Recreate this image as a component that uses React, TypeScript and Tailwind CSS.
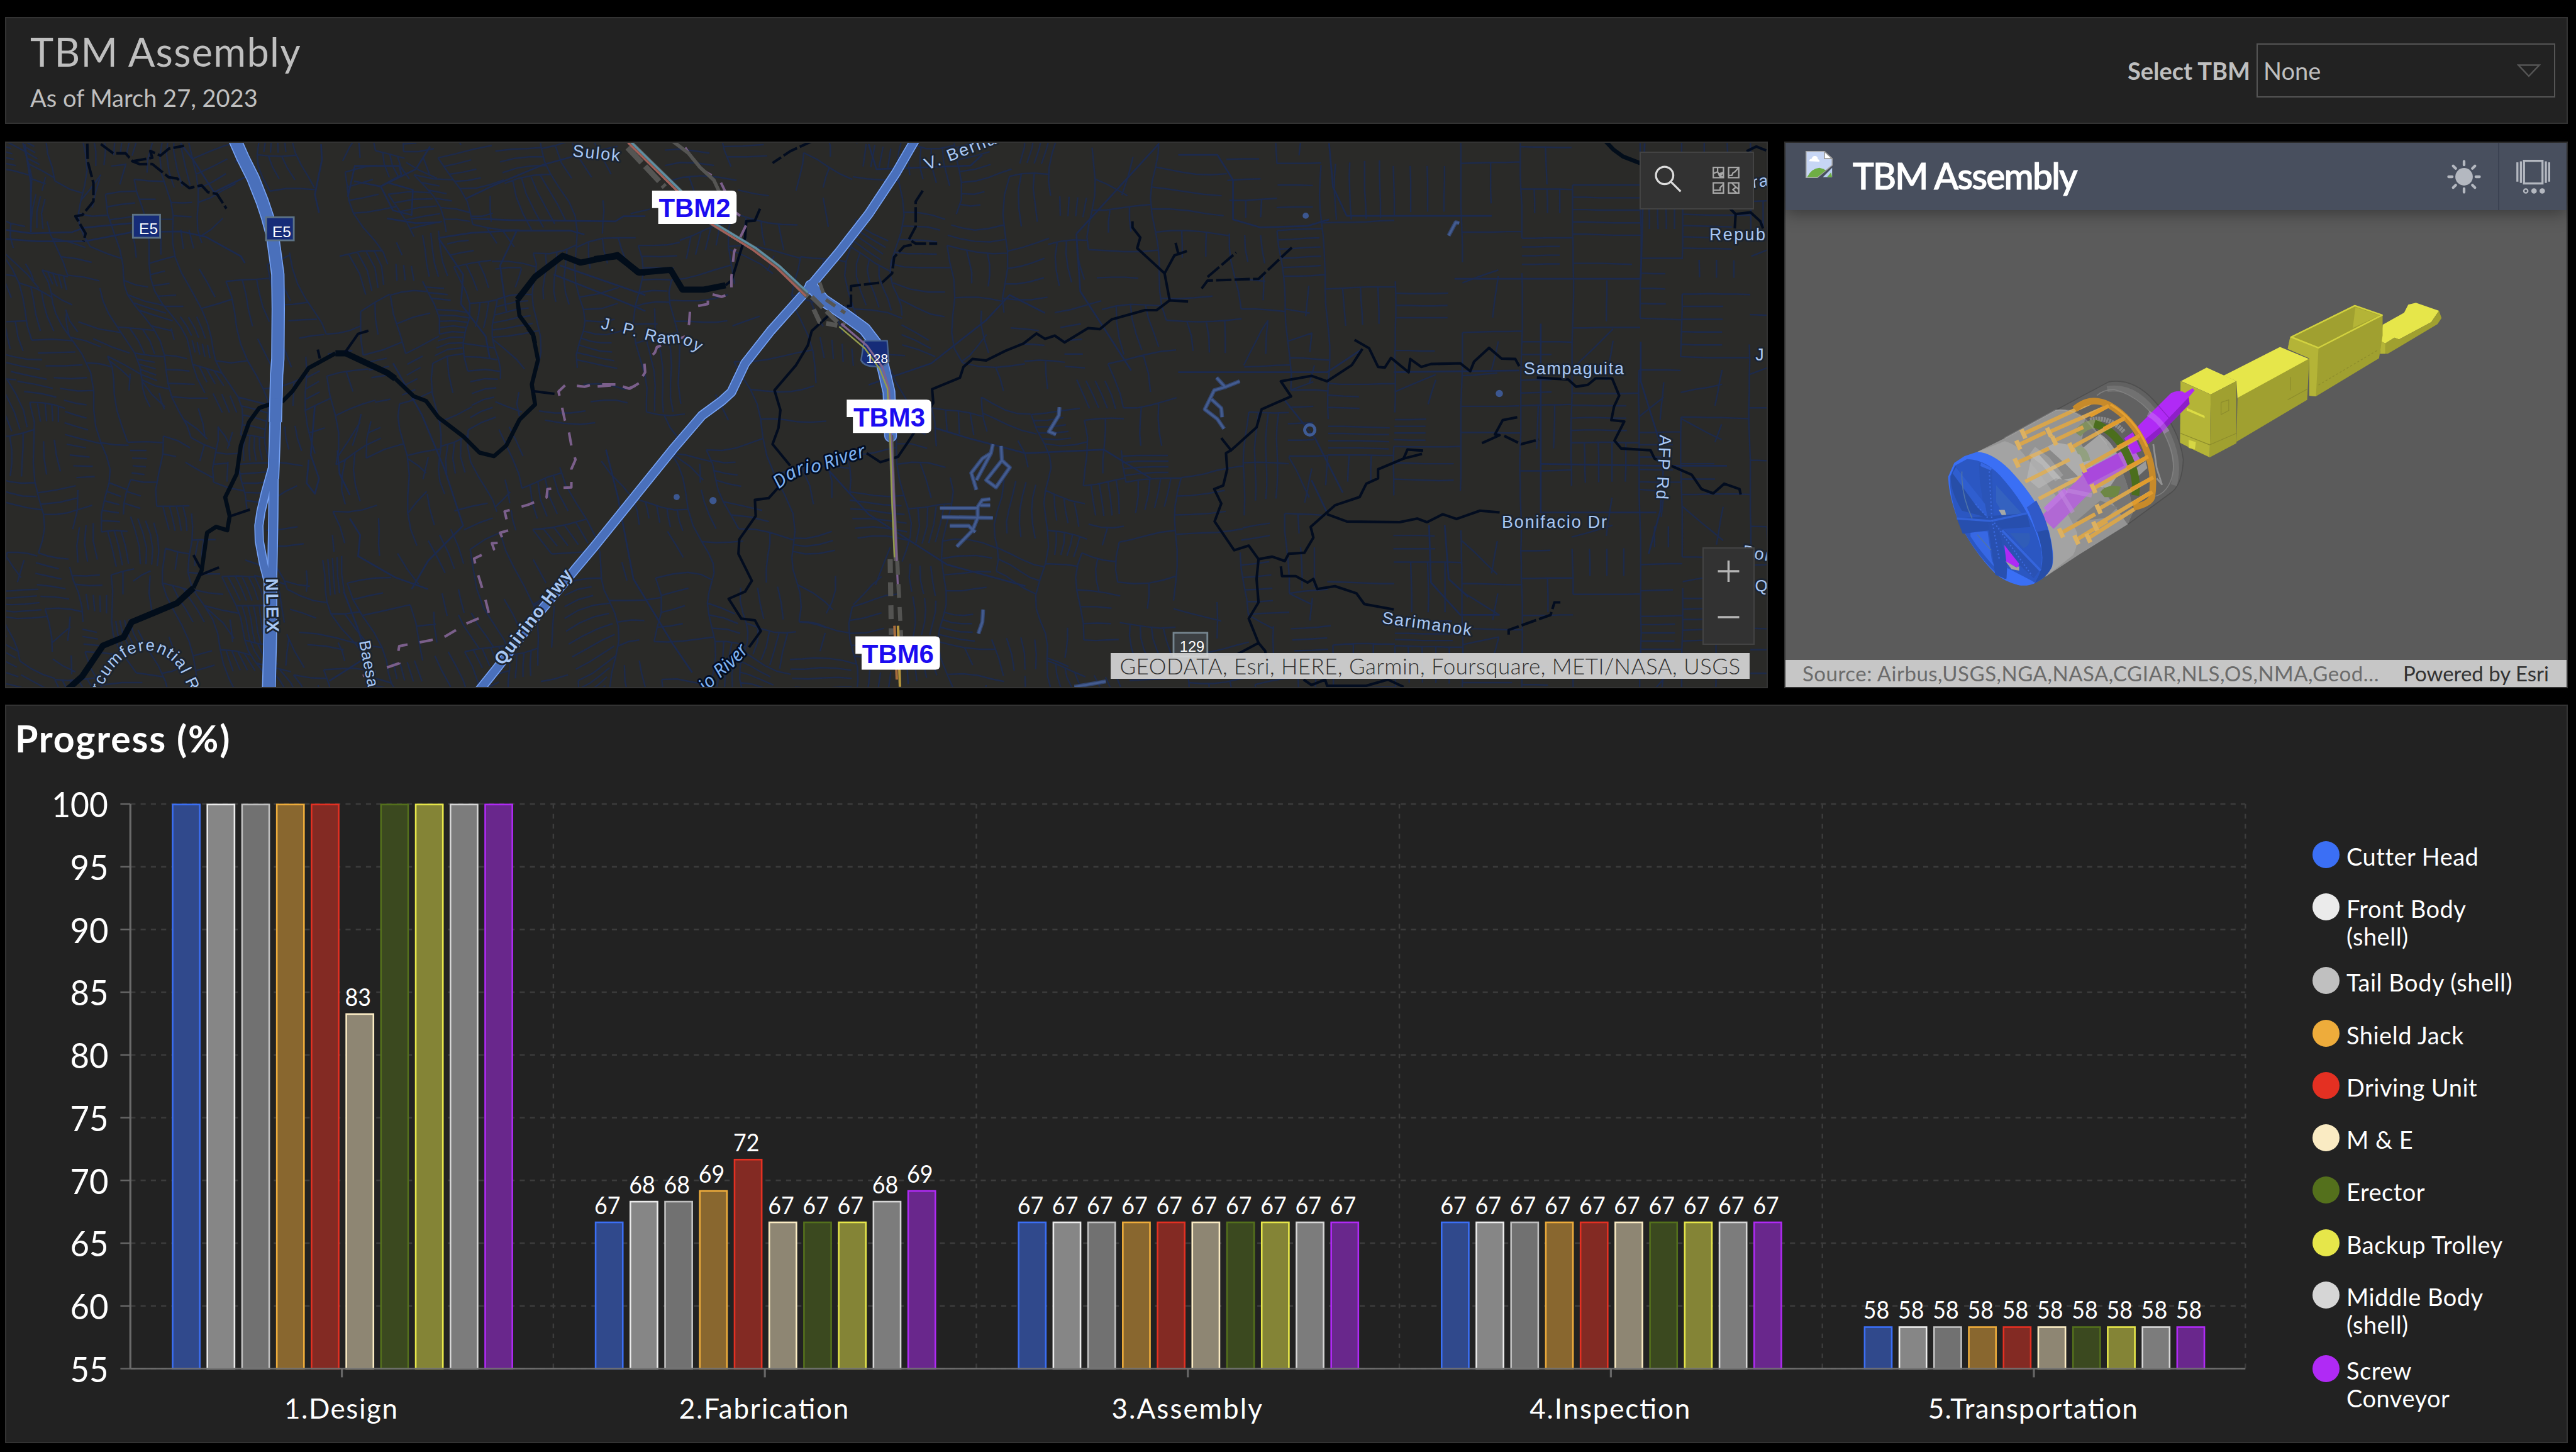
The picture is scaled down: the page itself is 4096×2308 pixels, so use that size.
import React from "react";

type Frame = [number, number, number, number];

/* Frames of the survey sheets: origin x, origin y, x scale, y scale */
const NW: Frame = [0, 0, 0.80357, 0.44643];
const MID: Frame = [1160, 260, 0.76531, 0.70153];
const EAST: Frame = [2300, 260, 0.76531, 0.70153];
const SW: Frame = [0, 640, 0.80357, 0.45918];
const SCENE: Frame = [3460, 550, 1.00064, 0.52296];

function pts(f: Frame, s: string): string {
  return s
    .trim()
    .split(/\s+/)
    .map((p) => {
      const [x, y] = p.split(",").map(Number);
      return (f[0] + x * f[2]).toFixed(1) + "," + (f[1] + y * f[3]).toFixed(1);
    })
    .join(" ");
}

/* ---------- Minor streets ---------- */

function rng(seed: number) {
  let a = seed;
  return () => {
    a = (a + 0x6d2b79f5) | 0;
    let t = Math.imul(a ^ (a >>> 15), 1 | a);
    t = (t + Math.imul(t ^ (t >>> 7), 61 | t)) ^ t;
    return ((t ^ (t >>> 14)) >>> 0) / 4294967296;
  };
}

/* Bends the regular lattice: straight in the east, slanted and wavy in the west */
function bend(x: number, y: number): [number, number] {
  const s = Math.max(0, Math.min(1, (2700 - x) / 1500));
  const amp = 2 + 24 * Math.min(1, s * 2);
  return [
    x + s * 0.22 * (y - 800) + amp * Math.sin(y / 110 + x / 330) + amp * 0.35 * Math.sin(y / 31 + x / 47),
    y + s * 60 * Math.sin(x / 300) + amp * Math.sin(x / 120 - y / 260) + amp * 0.35 * Math.sin(x / 37 - y / 53),
  ];
}

function isOpen(x: number, y: number): boolean {
  return (
    (x > 1010 && x < 1090 && y > 690 && y < 900) ||
    (x > 575 && x < 690 && y > 380 && y < 600) ||
    (x > 430 && x < 500 && y > 340 && y < 480) ||
    (x > 560 && x < 650 && y > 880 && y < 1100) ||
    (x > 400 && x < 500 && y > 980 && y < 1120) ||
    (x > 2560 && x < 2920 && y > 940 && y < 1040) ||
    (x > 2660 && x < 2860 && y > 430 && y < 470)
  );
}

function buildStreets(): string {
  const r = rng(417);
  const out: string[] = [];
  const road = (x1: number, y1: number, x2: number, y2: number) => {
    const [mx, my] = bend((x1 + x2) / 2, (y1 + y2) / 2);
    if (isOpen(mx, my)) return;
    const n = Math.max(1, Math.round(Math.hypot(x2 - x1, y2 - y1) / 28));
    let d = "";
    for (let i = 0; i <= n; i++) {
      const [px, py] = bend(x1 + ((x2 - x1) * i) / n, y1 + ((y2 - y1) * i) / n);
      d += `${i ? "L" : "M"}${px.toFixed(0)} ${py.toFixed(0)}`;
    }
    out.push(d);
  };
  let x = -260;
  while (x < 3700) {
    const west = x < 1000;
    const w = (west ? 46 : 72) + r() * (west ? 44 : 72);
    let y = 60 + r() * 60;
    while (y < 1560) {
      const h = (west ? 46 : 58) + r() * (west ? 60 : 78);
      if (r() < 0.66) road(x, y, x, y + h);
      if (r() < 0.66) road(x, y, x + w, y);
      const kind = r();
      const n = 1 + Math.floor(r() * 4);
      if (kind < 0.36) {
        const reach = 0.45 + r() * 0.55;
        for (let i = 1; i <= n; i++) road(x + (w * i) / (n + 1), y, x + (w * i) / (n + 1), y + h * reach);
      } else if (kind < 0.66) {
        const reach = 0.45 + r() * 0.55;
        for (let i = 1; i <= n; i++) road(x, y + (h * i) / (n + 1), x + w * reach, y + (h * i) / (n + 1));
      } else if (kind < 0.82) {
        const c = r();
        road(x, y + h * c, x + w * 0.6, y + h * r());
        road(x + w * 0.6, y + h * 0.2, x + w * 0.5, y + h * 0.8);
      }
      y += h;
    }
    x += w;
  }
  return out.join("");
}
const STREETS = buildStreets();

const TRACED: string[] = [
  pts(NW, "15,1005 75,1020 175,1015 205,995 320,975"),
  pts(NW, "15,1045 90,1055 205,1055 320,1015 440,1012 500,1035 585,1120 595,1150"),
  pts(NW, "440,630 470,700 520,840 595,775"),
  pts(NW, "845,860 862,725 970,725 975,765 925,815 860,792"),
  pts(NW, "925,815 1010,740 1045,640"),
  pts(NW, "925,815 955,920 1000,940 1003,830 945,800"),
  pts(NW, "940,955 1010,975 1070,972"),
  pts(NW, "1145,955 1240,962 1495,968 1515,945 1568,945"),
  pts(NW, "1065,1040 1145,1018 1245,1008 1385,1008 1420,1025"),
  pts(NW, "1065,1040 1125,1200 1120,1330 1180,1470 1190,1568"),
  pts(NW, "1255,1010 1215,1160 1230,1360"),
  pts(NW, "1130,870 1200,810 1320,720 1400,680 1500,640"),
  pts(NW, "780,630 782,700 765,850 775,930"),
  pts(NW, "60,630 75,800 75,1015"),
  pts(NW, "1360,1160 1568,1290"),
  pts(NW, "1345,1200 1500,1310 1568,1360"),
  pts(SW, "955,150 1025,370 1080,600 1125,840 1040,990 1000,1110"),
  pts(SW, "765,330 755,540 775,640 765,705 745,660 750,560"),
  pts(SW, "820,520 825,620 850,710"),
  pts(SW, "850,810 875,880 870,970 960,1060 1040,1110"),
  pts(SW, "835,1120 870,1280 890,1400 800,1500"),
  pts(MID, "700,30 720,100 960,90 990,60"),
  pts(MID, "1230,280 1440,30"),
  pts(MID, "1230,280 1240,440 1370,660"),
  pts(MID, "700,700 860,640 1000,520 1060,450 1150,500"),
  pts(MID, "870,820 960,850 1100,890 1300,880 1420,960"),
  pts(MID, "30,880 60,1010 100,1240 200,1420 250,1500"),
  pts(MID, "600,940 700,1060 900,1200 1100,1260"),
  pts(EAST, "0,60 100,60 140,130 140,240 210,262 330,258 385,240"),
  pts(EAST, "385,28 395,150 430,230 800,230"),
  pts(EAST, "0,665 380,665 470,600"),
  pts(EAST, "550,665 870,660"),
  pts(EAST, "705,405 1180,405 1190,28"),
  pts(EAST, "925,530 925,1055 1220,1055"),
  pts(EAST, "925,920 1225,925 1400,925"),
  pts(EAST, "270,740 350,850 420,1000"),
  pts(EAST, "340,965 380,1055"),
  pts(EAST, "1180,580 1180,690 1240,900 1230,1050 1200,1170"),
  pts(EAST, "640,1090 645,1250 720,1340 820,1340"),
  pts(EAST, "680,1090 690,1240 740,1290"),
];

const WIDE_RIVER = [
  pts(SW, "165,1535 200,1480 250,1350 300,1315 320,1250 430,1170 470,1105"),
  pts(SW, "815,108 840,108 940,190 960,215"),
  pts(NW, "1257,1310 1300,1210 1367,1118 1410,1148 1500,1115 1550,1190 1568,1192"),
  pts(MID, "0,350 60,342 115,388 195,380 225,435 280,435 335,423"),
];
const RIVER = [
  pts(SW, "470,1105 490,1030 503,870 525,845 552,860 558,800 547,720 575,620 585,500 605,400 630,340 655,325"),
  pts(SW, "685,315 710,270 750,170 815,108"),
  pts(SW, "960,215 1005,290 1035,310 1065,380 1125,460 1165,530 1200,545 1230,500 1262,390 1300,325 1292,240 1307,135 1295,30 1283,0"),
  pts(NW, "1300,1500 1295,1460 1262,1380 1257,1310"),
];
const CREEK = [
  pts(MID, "335,423 350,410 370,340 385,290 388,245 410,243 423,210"),
  pts(MID, "600,505 555,550 545,590 515,645 460,715 475,770 470,820 455,865 500,925"),
  pts(MID, "470,985 445,1015 410,1020 412,1065 370,1130 368,1170 402,1245 385,1275 343,1295 375,1350 410,1355 425,1385 395,1430"),
  pts(MID, "695,890 730,915 775,900 800,860 865,750 862,712 933,680 942,650 965,628 1000,632 1050,605 1095,585 1128,557 1150,572 1175,563 1200,582 1260,542 1290,545 1320,518 1405,492 1435,492 1468,465 1515,468"),
  pts(MID, "1468,465 1455,390 1385,320 1393,290 1373,262 1373,245"),
  pts(MID, "1455,390 1480,340 1512,328"),
  pts(MID, "1490,335 1483,305"),
  pts(EAST, "110,848 135,882 200,818 213,768 288,732 262,690 340,675 380,690 443,645 470,600"),
  pts(EAST, "450,575 487,598 510,650 527,652 543,625 588,665 592,628 620,650 645,642 720,640 745,662 755,635 793,597 825,627 860,628 870,648"),
  pts(EAST, "135,882 122,890 125,935 115,980 92,990 110,1030 93,1080 143,1160 180,1147 205,1185 240,1178 272,1190 282,1170 322,1167 345,1125 338,1095 400,1035 463,1012 480,975 510,960 510,935 575,905 585,880 625,883"),
  pts(EAST, "575,905 622,892"),
  pts(EAST, "380,1060 430,1080 565,1082 610,1072 635,1082 675,1060 710,1073 770,1050 820,1055"),
  pts(EAST, "205,1185 200,1240 205,1305 180,1350 205,1418 150,1450 100,1450"),
  pts(EAST, "205,1418 222,1440 225,1462"),
  pts(EAST, "320,1520 340,1535 375,1520 380,1537 480,1537 535,1520 575,1540"),
  pts(EAST, "262,1205 265,1232 300,1232 330,1250 345,1240 355,1268 400,1260 455,1280 475,1310 550,1325"),
  pts(EAST, "915,680 995,685 1015,705 1045,700 1065,682 1107,682 1125,730 1112,760 1105,798 1138,802 1113,855 1130,877 1205,882 1215,905 1310,950 1335,990 1365,1002 1393,975 1432,990 1435,1005"),
  pts(EAST, "1450,50 1475,37 1500,48"),
  pts(EAST, "1408,210 1422,225 1420,265"),
  pts(EAST, "1422,225 1460,220 1485,245 1492,265"),
  pts(EAST, "775,862 820,840 808,838 828,798 865,790"),
  pts(SW, "560,800 607,772"),
  pts(SW, "470,965 487,1020"),
  pts(SW, "487,1050 532,1018"),
  pts(SW, "1292,268 1347,280"),
  pts(SW, "838,105 870,25 895,12"),
  pts(SW, "772,92 777,130"),
];
const DASHED_CREEK = [
  pts(NW, "212,628 213,705 227,800 227,880 200,940 183,945 208,1020 203,1055"),
  pts(NW, "245,630 275,670 305,670 322,705 370,690 365,660 390,680 410,650 447,637"),
  pts(NW, "322,705 340,718 370,717 410,775 430,780 460,822 490,810 505,840 527,848 550,912"),
  pts(MID, "560,20 500,50 455,83"),
  pts(MID, "838,160 820,190 820,260 803,295 820,307 875,307"),
  pts(MID, "810,310 790,315 765,345 760,390 735,415 655,425 655,480 635,482"),
  pts(EAST, "60,432 75,410 205,405 290,318"),
  pts(EAST, "75,400 148,332"),
  pts(EAST, "832,842 875,865 920,852"),
  pts(EAST, "843,1395 843,1382 950,1340 960,1305 975,1305"),
];
const FOOTPATH = [
  pts(MID, "1187,762 1185,785 1160,830 1178,838"),
  pts(MID, "1017,865 1012,890 990,905 962,945 975,992"),
  pts(MID, "1012,890 975,965"),
  pts(MID, "1038,870 1040,910 1060,930 1025,985 1000,965 1040,910"),
  pts(MID, "882,1043 978,1043"),
  pts(MID, "887,1068 1017,1070"),
  pts(MID, "1010,1018 990,1020 978,1040 978,1070 965,1105 925,1150"),
  pts(MID, "985,1035 1010,1035"),
  pts(MID, "907,1092 955,1092 972,1110"),
  pts(MID, "992,1325 990,1360 980,1392"),
  pts(MID, "1225,1540 1305,1525"),
  pts(EAST, "98,680 120,706 157,690"),
  pts(EAST, "120,706 92,715 68,768 100,795 117,822"),
  pts(EAST, "85,740 110,765 112,790"),
  pts(EAST, "690,285 708,248 717,250"),
];
const BOUNDARY = [
  pts(MID, "232,40 260,85 280,105 320,130 360,220 385,240 388,255 370,295 357,330 350,400 350,445 325,455 290,445 290,475 245,485 242,530 233,565 160,595 155,610 128,640 130,665 110,700 88,710 60,700 0,705"),
  pts(SW, "1552,235 1530,258 1500,240 1440,240 1420,250 1375,240 1357,270 1372,390 1382,440 1388,500 1398,560 1388,600 1388,678 1355,680 1330,685 1328,720 1282,752 1226,780 1237,860 1215,870 1225,912 1195,915 1200,940 1152,980 1157,1025 1167,1080 1178,1145 1188,1215 1135,1255 1075,1318 970,1352 966,1390 970,1425 880,1480 862,1505"),
];

const NLEX_UP = pts(NW, "568,600 590,690 615,780 637,880 650,950 662,1030 675,1200 676,1350 675,1568") + " " + pts(SW, "672,200 669,400");
const NLEX_MID = pts(SW, "670,300 667,500 664,640");
const NLEX_THIN = pts(SW, "665,560 664,800 663,900 661,1080");
const NLEX_LOW = pts(SW, "657,1050 657,1230 656,1350 653,1545");
const NLEX_SIDE = pts(SW, "661,600 645,700 634,780 629,840 630,905 640,1000 652,1080");
const QUIRINO = pts(MID, "823,10 770,110 700,225 625,330 540,440 450,550 385,640 350,720 325,745 275,785 200,880 0,1150") + " " + pts(SW, "1400,1020 1310,1210 1210,1440 1160,1550");
const N128 = pts(MID, "553,425 585,465 640,505 690,545 718,585 737,650 752,720 756,842");

const MAP_TEXT = "Liberation Sans, Arial, sans-serif";

function Lines({ list, color, width, dash }: { list: string[]; color: string; width: number; dash?: string }) {
  return (
    <g fill="none" stroke={color} strokeWidth={width} strokeDasharray={dash} strokeLinejoin="round">
      {list.map((p, i) => (
        <polyline key={i} points={p} />
      ))}
    </g>
  );
}

function TbmTag({ x, y, label }: { x: number; y: number; label: string }) {
  return (
    <g>
      <path d={`M${x} ${y}h156q9 0 9 9v47q0 9 -9 9h-144v-31h-12z`} fill="#fff" />
      <text x={x + 13} y={y + 52} fontFamily={MAP_TEXT} fontWeight="700" fontSize="51.5" fill="#1c0cf0">
        {label}
      </text>
    </g>
  );
}

function CityMap() {
  return (
    <svg className="block h-full w-full" viewBox="12.28 278.7 3436.5 1062" preserveAspectRatio="none">
      <rect x="0" y="270" width="3460" height="1080" fill="#2a2a28" />
      <path d={STREETS} fill="none" stroke="#1d2a4a" strokeWidth="3" />
      <Lines list={TRACED} color="#1c2a4e" width={3.4} />
      <Lines list={WIDE_RIVER} color="#020d1a" width={12} />
      <Lines list={RIVER} color="#020d1a" width={8} />
      <polyline points={pts(EAST, "1090,22 1110,45 1135,65 1185,86")} fill="none" stroke="#020d1a" strokeWidth="8" />
      <Lines list={CREEK} color="#020c1f" width={5} />
      <Lines list={DASHED_CREEK} color="#020c1f" width={5} dash="30 6" />
      <Lines list={FOOTPATH} color="#33466f" width={8} />
      <Lines list={FOOTPATH} color="#445c90" width={4} />
      <circle cx="2557" cy="839" r="10" fill="none" stroke="#3f5c96" strokeWidth="6" />
      <g fill="#3c5790">
        <circle cx="2549" cy="421" r="6" />
        <circle cx="2927" cy="768" r="7" />
        <circle cx="1321" cy="970" r="6" />
        <circle cx="1392" cy="977" r="7" />
      </g>
      <Lines list={BOUNDARY} color="#7b5f8b" width={5} dash="26 24" />
      <Lines list={[pts(MID, "200,22 240,55 270,95 305,130 320,165")]} color="#555553" width={7} />
      <g fill="none" strokeLinejoin="round">
        <g stroke="#77a3f5">
          <polyline points={NLEX_SIDE} strokeWidth="18" />
          <polyline points={NLEX_UP} strokeWidth="26" />
          <polyline points={NLEX_MID} strokeWidth="23" />
          <polyline points={NLEX_THIN} strokeWidth="20" />
          <polyline points={NLEX_LOW} strokeWidth="27" />
          <polyline points={QUIRINO} strokeWidth="19" />
          <polyline points={N128} strokeWidth="25" strokeLinecap="round" />
        </g>
        <g stroke="#4a70bb">
          <polyline points={NLEX_SIDE} strokeWidth="14" />
          <polyline points={NLEX_UP} strokeWidth="22" />
          <polyline points={NLEX_MID} strokeWidth="19" />
          <polyline points={NLEX_THIN} strokeWidth="16" />
          <polyline points={NLEX_LOW} strokeWidth="23" />
          <polyline points={QUIRINO} strokeWidth="15" />
          <polyline points={N128} strokeWidth="21" strokeLinecap="round" />
        </g>
        <polyline points={pts(MID, "85,40 180,150")} stroke="#555553" strokeWidth="11" strokeDasharray="40 10" />
        <polyline points={pts(MID, "90,24 215,158 300,250 410,322 470,372 545,455")} stroke="#5b5b58" strokeWidth="10" />
        <polyline points={pts(MID, "86,26 211,160 300,253 405,325 465,374 540,453")} stroke="#a35f58" strokeWidth="4" />
        <polyline points={pts(MID, "95,26 219,158 306,250 414,321 474,371 545,443")} stroke="#5d8fa3" strokeWidth="4" />
        <polyline points={pts(MID, "555,455 620,525 640,535")} stroke="#555553" strokeWidth="9" strokeDasharray="30 10" />
        <polyline points={pts(MID, "575,415 590,462 640,500")} stroke="#555553" strokeWidth="7" strokeDasharray="22 14" />
        <polyline points={pts(MID, "560,490 575,525 620,535")} stroke="#555553" strokeWidth="9" strokeDasharray="28 12" />
        <path d="M1687 665h45l3 40q-10 14 -28 10q-20 0 -26 -12z" fill="#162c78" stroke="#47628f" strokeWidth="3" />
        <polyline points={pts(MID, "757,840 762,1000 770,1190")} stroke="#5a5a57" strokeWidth="9" />
        <polyline points={pts(MID, "630,530 695,590 735,650 752,710 757,850 765,1030 775,1270")} stroke="#7d6190" strokeWidth="4" />
        <polyline points={pts(MID, "625,538 690,598 728,655 748,710 755,850 760,1030 766,1180")} stroke="#949c4c" strokeWidth="3" />
        <polyline points={pts(MID, "755,1185 758,1395")} stroke="#535351" strokeWidth="10" strokeDasharray="27 18" />
        <polyline points={pts(MID, "773,1190 783,1400")} stroke="#535351" strokeWidth="8" strokeDasharray="27 18" />
        <polyline points={pts(MID, "766,1370 772,1520")} stroke="#a86c3c" strokeWidth="5" />
        <polyline points={pts(MID, "775,1370 780,1540")} stroke="#b5953c" strokeWidth="5" />
      </g>
      <g fontFamily={MAP_TEXT} fill="#fff">
        <rect x="259.500" y="419" width="53" height="45" fill="#162c78" stroke="#5d7386" strokeWidth="3.500" />
        <text x="271.500" y="456.500" fontSize="30">E5</text>
        <rect x="519.500" y="424" width="54" height="45" fill="#162c78" stroke="#5d7386" strokeWidth="3.500" />
        <text x="531.500" y="462.500" fontSize="30">E5</text>
        <text x="1691" y="709" fontSize="25.500">128</text>
        <rect x="2291" y="1235" width="66" height="46" fill="#3c4043" stroke="#75858f" strokeWidth="3.500" />
        <text x="2303" y="1272" fontSize="29">129</text>
      </g>
      <defs>
        <path id="p-ramoy" d="M1172 641Q1225 652 1262 663T1325 669Q1345 674 1385 700" />
        <path id="p-dario" d="M1521 955Q1560 918 1600 922Q1640 904 1710 886" />
        <path id="p-dario2" d="M1378 1352Q1404 1325 1426 1306Q1450 1290 1490 1230" />
        <path id="p-quirino" d="M981 1300L1055 1205L1150 1082" />
        <path id="p-circ" d="M196 1350Q207 1322 224 1302Q252 1267 297 1270Q335 1280 352 1310Q372 1350 384 1380" />
      </defs>
      <g fontFamily={MAP_TEXT} fontSize="33" fill="#a9c8f4" stroke="#1c2430" strokeWidth="7" strokeLinejoin="round" paintOrder="stroke">
        <text transform="translate(1117 305) rotate(6)" letterSpacing="2.500">Sulok</text>
        <text letterSpacing="3" fontSize="32"><textPath href="#p-ramoy">J. P. Ramoy</textPath></text>
        <text transform="translate(1810 332) rotate(-21)" letterSpacing="3">V. Berna</text>
        <text x="2975" y="731" textLength="195">Sampaguita</text>
        <text x="2932" y="1030" textLength="205">Bonifacio Dr</text>
        <text transform="translate(2697 1216) rotate(8)" textLength="176">Sarimanok</text>
        <text transform="translate(3240 848) rotate(93)" textLength="126">AFP Rd</text>
        <text x="3337" y="469" letterSpacing="3">Republi</text>
        <text x="3427" y="704">J</text>
        <text x="3426" y="1154" fontSize="32">Q</text>
        <text transform="translate(3400 1086) rotate(10)" letterSpacing="2">Por</text>
        <text transform="translate(3402 370) rotate(-8)" letterSpacing="2">gra</text>
        <text transform="translate(701 1252) rotate(79)" letterSpacing="1" fontSize="31">Baesa</text>
        <text fontSize="32" letterSpacing="2.500"><textPath href="#p-circ">rcumferential Rd</textPath></text>
        <text fontWeight="700" fontSize="34" transform="translate(519 1129) rotate(89)" textLength="105">NLEX</text>
        <text fontWeight="700" fontSize="34" letterSpacing="2.500"><textPath href="#p-quirino">Quirino Hwy</textPath></text>
      </g>
      <g fontFamily="Noto Sans, Liberation Sans, sans-serif" fontStyle="italic" fontSize="36" fill="#7fb2f0" stroke="#020d22" strokeWidth="7" strokeLinejoin="round" paintOrder="stroke">
        <text letterSpacing="0.800"><textPath href="#p-dario">Dario River</textPath></text>
        <text><textPath href="#p-dario2">io River</textPath></text>
      </g>
      <TbmTag x={1273} y={372} label="TBM2" />
      <TbmTag x={1653} y={780} label="TBM3" />
      <TbmTag x={1670} y={1242} label="TBM6" />
    </svg>
  );
}

/* ---------- 3D model ---------- */

const JACKS: [number, number, number, number][] = [
  [510, 440, 920, 250],
  [480, 505, 640, 430],
  [660, 430, 1010, 275],
  [470, 610, 660, 525],
  [690, 480, 860, 400],
  [790, 520, 1100, 350],
  [520, 720, 780, 590],
  [860, 640, 1190, 455],
  [600, 820, 850, 690],
  [920, 760, 1240, 575],
  [730, 1020, 930, 910],
  [950, 880, 1260, 700],
  [820, 1060, 1000, 950],
  [930, 980, 1260, 780],
  [890, 1050, 1160, 880],
];

function Machine() {
  const poly = (s: string, fill: string, stroke?: string) => <polygon points={pts(SCENE, s)} fill={fill} stroke={stroke} strokeWidth={stroke ? 3 : 0} />;
  return (
    <svg className="block h-full w-full" viewBox="3485.7 410 1524 877.8" preserveAspectRatio="none">
      <g strokeLinejoin="round">
        {poly("1190,160 1232,115 1240,85 1255,78 1300,108 1285,150 1222,215 1213,208 1195,230 1187,222", "#e6e64a")}
        {poly("1300,108 1305,135 1297,158 1225,240 1200,268 1185,268 1187,222 1195,230 1213,208 1222,215 1285,150", "#a0a030")}
        {poly("1187,222 1195,230 1195,268 1185,268", "#b4b437")}
        {poly("1010,205 1135,87 1190,125 1190,200 1183,285 1060,427 1047,425 1047,285 1005,250", "#a0a030")}
        {poly("1010,205 1065,245 1060,427 1047,425 1047,285 1005,250", "#b4b437")}
        {poly("1012,206 1136,89 1189,124 1065,246", "#a0a030", "#d2d240")}
        {poly("1137,95 1184,125 1132,172", "#b4b437")}
        {poly("880,350 990,243 1047,288 907,435 905,370", "#e6e64a")}
        {poly("907,433 1047,286 1043,440 905,597", "#a0a030")}
        {poly("797,370 847,320 905,370 855,420", "#e6e64a")}
        {poly("796,370 855,420 853,655 820,625 795,600", "#b4b437")}
        {poly("905,370 855,420 853,655 905,602", "#a0a030")}
        {poly("808,470 843,500 843,508 808,480", "#dcdc44")}
        {poly("812,590 826,598 824,625 812,620", "#d6d644")}
        <g fill="none" stroke="#8c8c2c" strokeWidth="1.500">
          <polyline points={pts(SCENE, "796,565 853,608 905,565")} />
          <polyline points={pts(SCENE, "875,450 890,440 890,480 875,495 875,450")} />
          <polyline points={pts(SCENE, "1010,355 1010,405")} />
          <polyline points={pts(SCENE, "1005,440 1043,400")} />
          <polyline points={pts(SCENE, "1065,385 1180,255")} strokeDasharray="4 4" />
        </g>
      </g>
      <g transform="translate(3780 700) scale(0.33333)" strokeLinejoin="round">
        <path d="M700 300L1010 135Q1150 112 1270 240Q1420 400 1446 590Q1440 730 1380 780L1120 970Q1140 600 870 350Q800 300 700 300Z" fill="#fff" fillOpacity="0.04" stroke="#4e4e4e" strokeWidth="6" />
        <path d="M1000 178Q1170 150 1300 350Q1440 560 1390 740" fill="none" stroke="#7c7c7c" strokeOpacity="0.6" strokeWidth="36" />
        <path d="M940 215Q980 180 1040 180Q1230 230 1330 430Q1420 600 1370 720Q1340 790 1280 805" fill="none" stroke="#868686" strokeOpacity="0.8" strokeWidth="6" />
        <path d="M1270 500L1290 640L1320 735L1290 700" fill="none" stroke="#929292" strokeWidth="10" />
        <path d="M240 545L400 465L700 300Q800 290 870 350Q1120 600 1150 900L1120 970L830 1150L640 1275Q500 900 240 545Z" fill="#949494" />
        <path d="M240 545L400 483Q470 500 520 570Q760 860 825 1020Q830 1100 800 1150L640 1275Q500 900 240 545Z" fill="#a3a3a3" />
        <path d="M870 350Q1120 600 1150 900L1120 970L1000 800L850 500Z" fill="#757575" />
        <path d="M560 560L700 490L860 520L960 440Q1050 500 1090 640L1010 760L700 700L600 760L530 700Z" fill="#b5b5b5" fillOpacity="0.75" />
        <path d="M600 560L660 530L760 620L830 690L740 710Z" fill="#898989" />
        <path d="M820 950L960 830L1060 870L1000 930L850 950Z" fill="#808080" />
        <path d="M900 360Q1010 330 1100 430" fill="none" stroke="#9c9c9c" strokeOpacity="0.7" strokeWidth="28" strokeDasharray="12 4" />
        <path d="M1170 640L1225 600L1235 640L1180 690Z" fill="#9a9a9a" />
        <g stroke="#d9ae5f" strokeWidth="22">
          <line x1="520" y1="720" x2="780" y2="590" />
          <line x1="600" y1="820" x2="850" y2="690" />
        </g>
        <path d="M650 960L780 830L900 710L1170 550" fill="none" stroke="#b168d4" strokeWidth="104" />
        <path d="M640 885L760 770" fill="none" stroke="#bd76df" strokeWidth="34" />
        <path d="M870 700L1080 590" fill="none" stroke="#a948dc" strokeWidth="82" />
        <path d="M760 770L910 800M800 900L720 770" fill="none" stroke="#c48be0" strokeOpacity="0.5" strokeWidth="26" />
        <path d="M825 440Q880 370 960 385" fill="none" stroke="#81905f" strokeWidth="50" />
        <path d="M820 540Q860 520 880 600" fill="none" stroke="#92a080" strokeWidth="45" />
        <path d="M925 380Q1060 420 1130 590Q1180 700 1165 800" fill="none" stroke="#4b6e1d" strokeWidth="46" />
        <path d="M960 780Q1000 730 1080 750L1060 810L985 810Z" fill="#6d8744" />
        <path d="M1100 465L1150 430L1200 540L1150 560Z" fill="#ad2bef" />
        <path d="M1175 400L1370 205Q1400 185 1440 192L1455 200L1500 172L1512 185L1478 225L1482 265L1330 420L1240 500Z" fill="#b02af5" />
        <path d="M1478 225L1482 265L1330 420L1240 500L1225 470L1310 400Z" fill="#8e1fc8" />
        <path d="M1300 275L1370 355" stroke="#8e1fc8" strokeWidth="5" />
        <path d="M1240 320Q1300 350 1350 430" fill="none" stroke="#d79bf5" strokeOpacity="0.35" strokeWidth="34" />
        <g stroke="#d8a54c" strokeWidth="23">
          {JACKS.filter(([a]) => a !== 520 && a !== 600).map(([a, b, c, d], i) => (
            <line key={i} x1={a} y1={b} x2={c} y2={d} />
          ))}
        </g>
        <g stroke="#dcb162" strokeWidth="26">
          {JACKS.filter(([a]) => a !== 520 && a !== 600).map(([a, b], i) => (
            <line key={i} x1={a - 12} y1={b - 26} x2={a + 12} y2={b + 26} />
          ))}
        </g>
        <path d="M810 295Q900 215 1010 270Q1150 350 1220 510Q1285 660 1262 810Q1250 850 1155 870" fill="none" stroke="#c78a2a" strokeWidth="38" />
        <path d="M1020 268Q1160 350 1234 515" fill="none" stroke="#e5a031" strokeWidth="12" />
        <g stroke="#e09b2d" strokeWidth="22">
          <line x1="900" y1="335" x2="1010" y2="275" />
          <line x1="980" y1="410" x2="1105" y2="345" />
          <line x1="1060" y1="520" x2="1190" y2="450" />
          <line x1="1115" y1="640" x2="1240" y2="572" />
          <line x1="1140" y1="765" x2="1270" y2="695" />
          <line x1="1150" y1="850" x2="1265" y2="780" />
        </g>
        <path d="M560 540L640 600L720 700" fill="none" stroke="#d8d8d8" strokeOpacity="0.25" strokeWidth="60" />
        <path d="M400 465L700 300Q800 290 870 350L1000 500" fill="none" stroke="#c8c8c8" strokeOpacity="0.2" strokeWidth="10" />

        <path d="M105 610L165 570L240 545Q330 550 430 650Q600 830 660 1010Q695 1150 678 1215Q650 1280 575 1315Q530 1335 480 1325Q400 1305 345 1258Q210 1120 125 940Q70 790 70 690Z" fill="#3a6ff5" />
        <path d="M655 1000Q690 1130 678 1215Q650 1280 575 1315L610 1240Q640 1150 585 1000Z" fill="#274ea8" />
        <path d="M585 830Q640 930 655 1000L585 1015Q560 930 530 870Z" fill="#3059c8" />
        <path d="M110 625L180 588Q300 590 400 715Q560 900 615 1120Q630 1240 575 1310L560 1300Q430 1270 400 1290L345 1250Q210 1120 125 940Q75 790 80 690Z" fill="#2b57c2" />
        <path d="M85 690L110 625L290 870L300 930L150 890Q80 770 85 690Z" fill="#274ea8" />
        <path d="M200 1010L300 1010L325 1180L345 1225Q250 1120 200 1040Z" fill="#3768e4" />
        <path d="M415 1225L560 1300Q540 1330 480 1325L410 1290Z" fill="#3a6ff5" />
        <path d="M350 740Q450 850 500 905L400 920L350 840Z" fill="#3462c0" />
        <path d="M430 1020L545 1020Q560 1090 510 1110Z" fill="#305db8" />
        <path d="M365 885L400 885L410 915L385 918Z" fill="#a4a8a8" />
        <path d="M250 610L325 640L335 940L290 940L255 720Z" fill="#2a54b8" />
        <path d="M262 608L325 640L320 655L258 628Z" fill="#3768e4" />
        <path d="M115 635L285 850L300 930L240 870L95 670Z" fill="#2f5ecf" />
        <path d="M120 935L530 905L550 985L340 1000L155 1025Z" fill="#274fae" />
        <path d="M120 935L320 950L530 905" fill="none" stroke="#3363d8" strokeWidth="12" />
        <path d="M320 950L400 1005L610 1230L570 1285L480 1200L330 1010Z" fill="#2a52b4" />
        <path d="M385 1005L610 1240" fill="none" stroke="#3565dd" strokeWidth="14" />
        <path d="M300 960L345 1265L410 1290L415 1180L350 960Z" fill="#2850b0" />
        <path d="M310 660L325 940L370 1180" fill="none" stroke="#3b6ae0" strokeWidth="8" strokeDasharray="8 14" />
        <path d="M230 850L300 930M340 960L560 1270" fill="none" stroke="#3b6ae0" strokeWidth="8" strokeDasharray="8 12" />
        <path d="M150 660Q145 800 210 935M240 1030L320 1120" fill="none" stroke="#4f74a8" strokeWidth="6" />
        <path d="M398 1090L485 1200L478 1225L410 1190Z" fill="#b02af5" />
        <path d="M405 1185L470 1222L485 1215L485 1240L440 1232Z" fill="#a5a5a0" />
      </g>
    </svg>
  );
}

/* ---------- Icons ---------- */

function SearchIcon() {
  return (
    <svg className="-mt-[5px] block h-[43px] w-[43px]" viewBox="0 0 53 53" fill="none" stroke="#dcdcdc" strokeWidth="4">
      <circle cx="19.500" cy="19.500" r="17" />
      <path d="M31.500 31.500L51 51" />
    </svg>
  );
}

function BasemapIcon() {
  return (
    <svg className="-mt-[2px] block h-[43px] w-[43px]" viewBox="0 0 53 53" fill="none" stroke="#a8a8a8" strokeWidth="2.800">
      <path d="M1.500 1.500h20v20h-20zM31.500 1.500h20v20h-20zM1.500 31.500h20v20h-20zM31.500 31.500h20v20h-20z" />
      <path d="M2 13l8 -3 0 -8M10 10l6 11M21 11l-8 3M12 15l9 6M12 18l9 -5M32 17h6l2 -5 4 -2 6 -7M2 46h13l0 -5 6 -6M38 32l8 8 -6 5 7 6M46 40l5 4" />
    </svg>
  );
}

function SunIcon() {
  return (
    <svg className="block h-[54px] w-[54px]" viewBox="0 0 66 66" stroke="#b4b8c0" strokeWidth="5.200" strokeLinecap="round">
      <circle cx="33" cy="33" r="17" fill="#b4b8c0" stroke="none" />
      <path d="M33 3v7M33 56v7M3 33h7M56 33h7M11.800 11.800l5 5M49.200 49.200l5 5M54.200 11.800l-5 5M16.800 49.200l-5 5" />
    </svg>
  );
}

function SlidesIcon() {
  return (
    <svg className="block h-[54px] w-[54px]" viewBox="0 0 66 66" fill="none" stroke="#b4b8c0" strokeWidth="4">
      <rect x="15" y="2" width="36" height="44" />
      <path d="M9 3v42M57.500 3v42M2.200 5v37.500M64 5v37.500" />
      <circle cx="18.500" cy="60.500" r="3.800" strokeWidth="3" />
      <circle cx="34.500" cy="60.500" r="5.300" fill="#b4b8c0" stroke="none" />
      <circle cx="50.500" cy="60.500" r="5.300" fill="#b4b8c0" stroke="none" />
    </svg>
  );
}

function BrokenImageIcon() {
  return (
    <svg className="block h-[43px] w-[43px]" viewBox="0 0 53 53">
      <path d="M1 1H37L52 15V28L23 52H1Z" fill="#c7d6f5" stroke="#a8a8a8" strokeWidth="2" />
      <path d="M7 20q0 -4 5 -5q2 -6 7 -5q5 1 5 6q4 1 3 5z" fill="#fff" />
      <path d="M3 51Q12 34 27 33Q34 34 40 38L23 51Z" fill="#6fae45" />
      <path d="M52 33V51H34Z" fill="#b9cdf0" />
      <path d="M42 51L50 42L52 51Z" fill="#6fae45" />
      <path d="M37 1V15H52Z" fill="#fff" stroke="#9a9a9a" strokeWidth="2" />
    </svg>
  );
}

/* ---------- Chart ---------- */

const SERIES = [
  { name: "Cutter Head", color: "#3b6ff5", fill: "#30498c" },
  { name: "Front Body (shell)", color: "#ebebeb", fill: "#868686" },
  { name: "Tail Body (shell)", color: "#c0c0c0", fill: "#717171" },
  { name: "Shield Jack", color: "#eeac3b", fill: "#89672f" },
  { name: "Driving Unit", color: "#e43022", fill: "#832a23" },
  { name: "M & E", color: "#faebc3", fill: "#8e8673" },
  { name: "Erector", color: "#54701c", fill: "#3b491f" },
  { name: "Backup Trolley", color: "#e6e64a", fill: "#848436" },
  { name: "Middle Body (shell)", color: "#d6d6d6", fill: "#7c7c7c" },
  { name: "Screw Conveyor", color: "#b02af5", fill: "#69278c" },
];

const GROUPS: { name: string; width: number; values: number[] }[] = [
  { name: "1.Design", width: 221, values: [100, 100, 100, 100, 100, 83.3, 100, 100, 100, 100] },
  { name: "2.Fabrication", width: 331, values: [66.7, 68.35, 68.35, 69.2, 71.7, 66.7, 66.7, 66.7, 68.35, 69.2] },
  { name: "3.Assembly", width: 294, values: Array(10).fill(66.7) },
  { name: "4.Inspection", width: 313, values: Array(10).fill(66.7) },
  { name: "5.Transportation", width: 409, values: Array(10).fill(58.35) },
];

const X0 = 254.5;
const X1 = 4383.5;
const YT = 1569;
const YB = 2671;
const yOf = (v: number) => YB - ((v - 55) / 45) * (YB - YT);

function ProgressChart() {
  const gw = (X1 - X0) / 5;
  const ticks = [55, 60, 65, 70, 75, 80, 85, 90, 95, 100];
  return (
    <svg className="block h-[1070px] w-[3590px] shrink-0" viewBox="12.28 1500.3 4407.7 1313.7" fontFamily="Lato, sans-serif" fill="#fff">
      <g stroke="#3c3c3c" strokeWidth="3">
        {ticks.map((t) => (
          <line key={t} x1={X0} x2={X1} y1={yOf(t)} y2={yOf(t)} strokeDasharray="10 10" />
        ))}
        {[1, 2, 3, 4, 5].map((i) => (
          <line key={i} x1={X0 + gw * i} x2={X0 + gw * i} y1={YT} y2={YB} strokeDasharray="9 10.5" />
        ))}
      </g>
      {ticks.map((t) => (
        <g key={t}>
          <line x1="235" x2={X0} y1={yOf(t)} y2={yOf(t)} stroke="#666" strokeWidth="3" />
          <text x={t === 100 ? 101 : 137} y={yOf(t) + 26} fontSize="68" textLength={t === 100 ? 110 : 75} lengthAdjust="spacingAndGlyphs">
            {t}
          </text>
        </g>
      ))}
      <line x1={X0} x2={X0} y1={YT} y2={YB} stroke="#6a6a6a" strokeWidth="4" />
      {GROUPS.map((g, gi) => (
        <g key={g.name}>
          {g.values.map((v, i) => {
            const x = X0 + gw * gi + 81 + i * 67.8;
            return (
              <g key={i}>
                <rect x={x + 1.5} y={yOf(v) + 1} width="53" height={YB - yOf(v) - 1} fill={SERIES[i].fill} stroke={SERIES[i].color} strokeWidth="3.200" />
                {v < 100 && (
                  <text x={x - 1} y={yOf(v) - 15} fontSize="47" textLength="51" lengthAdjust="spacingAndGlyphs">
                    {Math.floor(v + 0.35)}
                  </text>
                )}
              </g>
            );
          })}
          <line x1={X0 + gw * (gi + 0.5)} x2={X0 + gw * (gi + 0.5)} y1={YB} y2={YB + 17} stroke="#666" strokeWidth="4" />
          <text x={X0 + gw * (gi + 0.5) - g.width / 2 - 2} y="2768" fontSize="54" textLength={g.width}>
            {g.name}
          </text>
        </g>
      ))}
      <line x1={X0} x2={X1} y1={YB} y2={YB} stroke="#6e6e6e" strokeWidth="3" />
    </svg>
  );
}

const LEGEND: [string, string?][] = [
  ["Cutter Head"],
  ["Front Body", "(shell)"],
  ["Tail Body (shell)"],
  ["Shield Jack"],
  ["Driving Unit"],
  ["M & E"],
  ["Erector"],
  ["Backup Trolley"],
  ["Middle Body", "(shell)"],
  ["Screw", "Conveyor"],
];

function Legend() {
  return (
    <ul className="flex flex-col pt-[115px] pl-[77px]">
      {LEGEND.map(([a, b], i) => (
        <li key={a} className={b ? "flex h-[117px] items-start gap-[11px]" : "flex h-[83.300px] items-start gap-[11px]"}>
          <svg className="block h-[43px] w-[43px]" viewBox="0 0 43 43">
            <circle cx="21.500" cy="21.500" r="21.500" fill={SERIES[i].color} />
          </svg>
          <span className="mt-[3px] text-[38px] leading-[43.500px] tracking-[0.500px] whitespace-nowrap text-white">
            {a}
            {b && <br />}
            {b}
          </span>
        </li>
      ))}
    </ul>
  );
}

/* ---------- Page ---------- */

export default function App() {
  return (
    <div className="flex h-[2308px] w-[4096px] flex-col overflow-hidden bg-black pt-[27px] pr-[13px] pl-[8px] font-[Lato,sans-serif]">
      <header className="flex h-[170px] shrink-0 items-start justify-between border-2 border-[#333] bg-[#222] pr-[18px] pl-[38px] text-[#bfbfbf]">
        <div className="flex flex-col pt-[14px]">
          <h1 className="text-[63px] leading-[78px] font-normal tracking-[1.300px] whitespace-nowrap">TBM Assembly</h1>
          <p className="mt-[10px] text-[38px] leading-[48px] whitespace-nowrap">As of March 27, 2023</p>
        </div>
        <div className="flex items-center gap-[10px] pt-[40px]">
          <span className="text-[38px] leading-[48px] font-bold whitespace-nowrap">Select TBM</span>
          <div className="flex h-[86px] w-[475px] items-center justify-between border-2 border-[#555] pr-[21px] pl-[9px]">
            <span className="text-[38px] leading-[48px]">None</span>
            <svg className="block h-[21px] w-[38px]" viewBox="0 0 38 21" fill="none" stroke="#555" strokeWidth="2.500">
              <path d="M2.500 1.500H35.500L19 19Z" />
            </svg>
          </div>
        </div>
      </header>

      <div className="mt-[28px] flex h-[869px] shrink-0 gap-[26px]">
        <section className="relative w-[2803px] shrink-0 border-2 border-[#333]">
          <CityMap />
          <div className="absolute top-[14px] right-[20px] flex h-[92px] w-[182px] items-center justify-between border-[2.500px] border-[#434343] bg-[#323232] pr-[21px] pl-[22px]">
            <SearchIcon />
            <BasemapIcon />
          </div>
          <div className="absolute right-[19px] bottom-[67px] flex h-[155px] w-[83px] flex-col border-[2.500px] border-[#434343] bg-[#323232]">
            <svg className="block h-[75px] w-full" viewBox="0 0 78 75" stroke="#b5b5b5" strokeWidth="3.500">
              <path d="M22 36H56M39 19V53" />
            </svg>
            <svg className="block h-[75px] w-full" viewBox="0 0 78 75" stroke="#b5b5b5" strokeWidth="3.500">
              <path d="M22 34H56" />
            </svg>
          </div>
          <div className="absolute right-[27px] bottom-[13px] flex h-[41px] w-[1016px] items-center justify-center bg-[#d9d9d9]/90 text-[35px] leading-[41px] font-light tracking-[0.450px] whitespace-nowrap text-[#323232]">
            GEODATA, Esri, HERE, Garmin, Foursquare, METI/NASA, USGS
          </div>
        </section>

        <section className="flex w-[1246px] flex-col border-2 border-[#333] bg-[#5b5b5b]">
          <div className="z-10 flex h-[107px] shrink-0 items-stretch bg-[#484f5e] shadow-[0_4px_26px_rgba(0,0,0,0.4)]">
            <div className="pt-[13px] pl-[32px]">
              <BrokenImageIcon />
            </div>
            <h2 className="flex-1 pt-[14px] pl-[32px] text-[57px] leading-[76px] font-medium tracking-[-1.800px] whitespace-nowrap text-white [-webkit-text-stroke:1.200px_white]">TBM Assembly</h2>
            <div className="flex w-[110px] items-center justify-center border-r-[2px] border-[#3b4252]">
              <SunIcon />
            </div>
            <div className="flex w-[107px] items-center justify-center">
              <SlidesIcon />
            </div>
          </div>
          <div className="h-[715px] shrink-0">
            <Machine />
          </div>
          <div className="flex h-[43px] items-center justify-between bg-[#c6c6c6] pr-[28px] pl-[27px] text-[33px] leading-[43px] whitespace-nowrap">
            <span className="tracking-[0.500px] text-[#6b6b6b]">Source: Airbus,USGS,NGA,NASA,CGIAR,NLS,OS,NMA,Geod…</span>
            <span className="text-[#323232]">Powered by Esri</span>
          </div>
        </section>
      </div>

      <section className="mt-[26px] flex h-[1174px] shrink-0 flex-col border-2 border-[#333] bg-[#222]">
        <h2 className="h-[100px] shrink-0 pt-[12px] pl-[14px] text-[59px] leading-[80px] font-bold tracking-[1.800px] whitespace-nowrap text-white">Progress (%)</h2>
        <div className="flex h-[1070px]">
          <ProgressChart />
          <Legend />
        </div>
      </section>
    </div>
  );
}
